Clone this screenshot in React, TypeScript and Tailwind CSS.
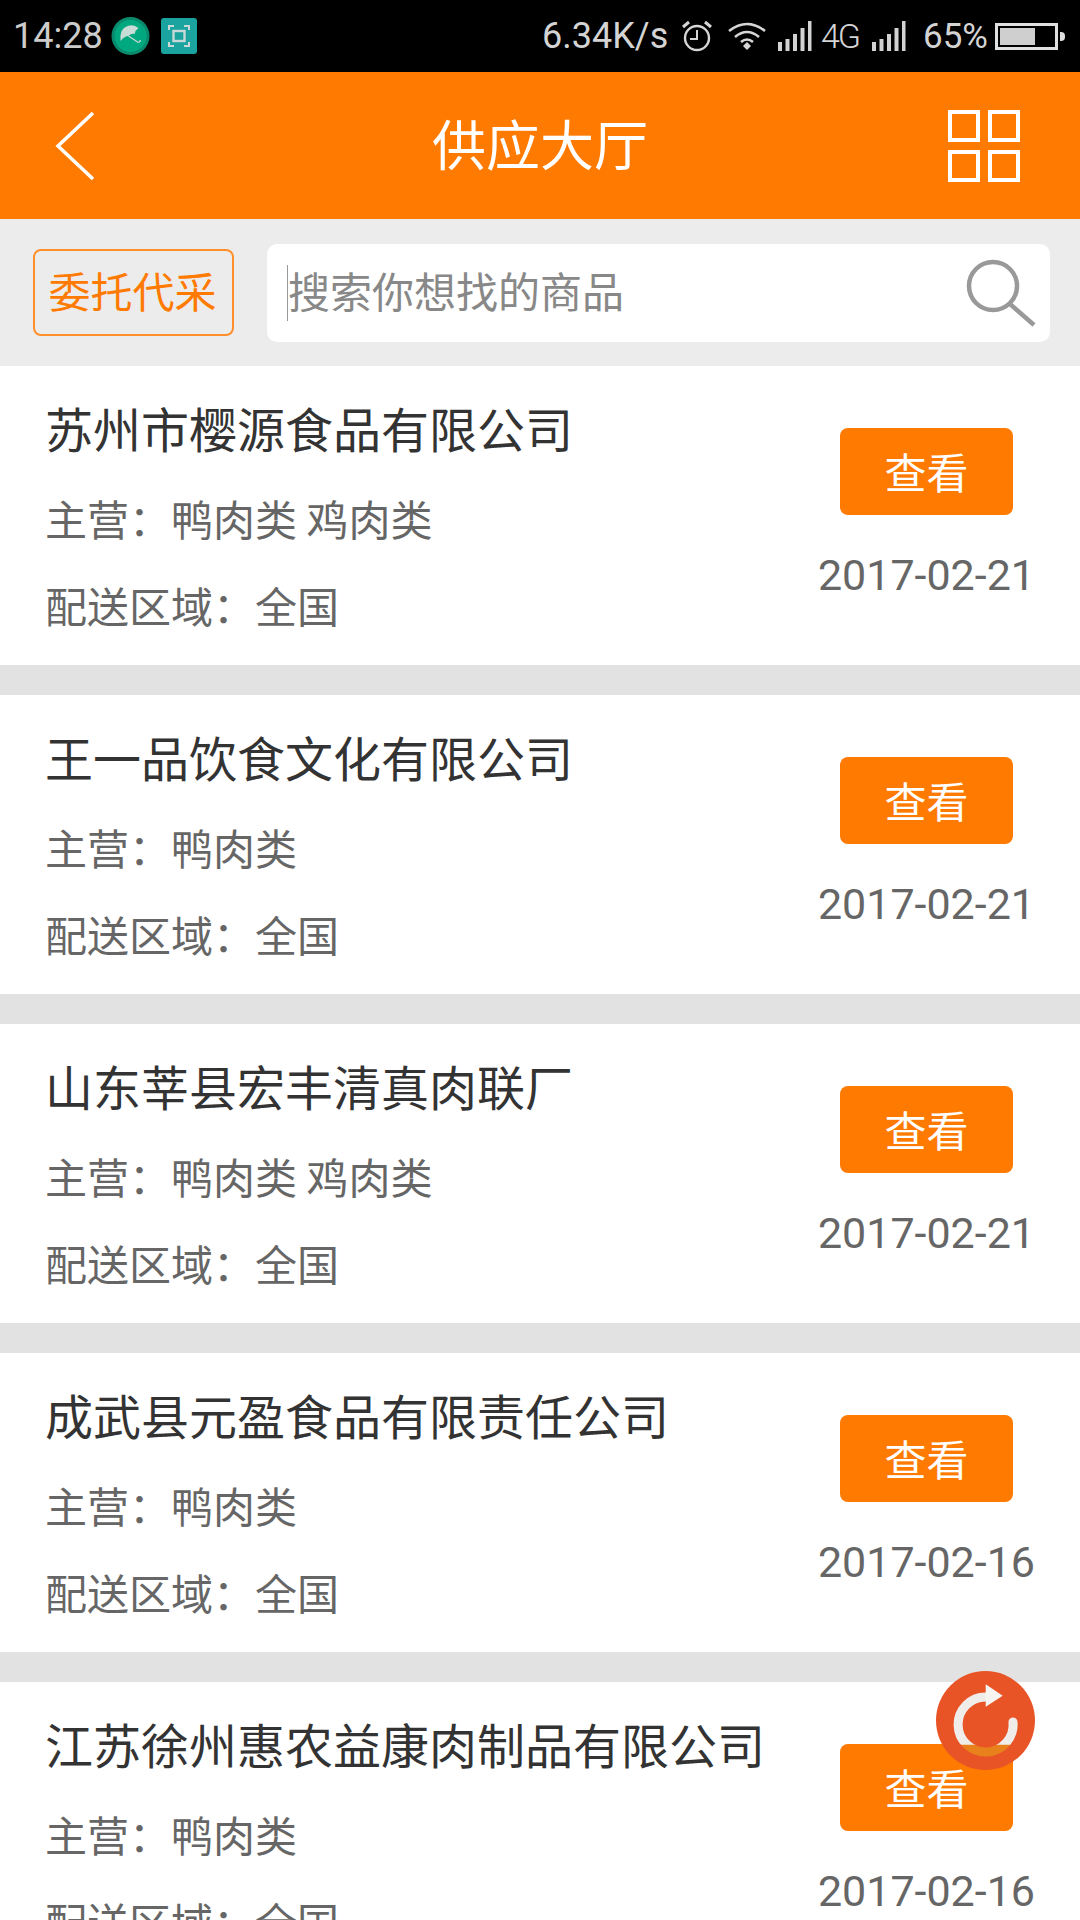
const companies = [
  { name: '苏州市樱源食品有限公司', main: '鸭肉类 鸡肉类', date: '2017-02-21' },
  { name: '王一品饮食文化有限公司', main: '鸭肉类', date: '2017-02-21' },
  { name: '山东莘县宏丰清真肉联厂', main: '鸭肉类 鸡肉类', date: '2017-02-21' },
  { name: '成武县元盈食品有限责任公司', main: '鸭肉类', date: '2017-02-16' },
  { name: '江苏徐州惠农益康肉制品有限公司', main: '鸭肉类', date: '2017-02-16' },
];

function SignalBars() {
  return (
    <svg width="34" height="30" viewBox="0 0 34 30" fill="#d2d2d2">
      <rect x="0" y="21" width="4" height="9" />
      <rect x="7.5" y="18" width="4" height="12" />
      <rect x="15" y="13" width="4" height="17" />
      <rect x="22.5" y="7" width="4" height="23" />
      <rect x="30" y="0" width="3.5" height="30" />
    </svg>
  );
}

function StatusBar() {
  return (
    <div className="h-[72px] bg-black flex items-center pl-[13px] text-[#d4d4d4] font-['Roboto',sans-serif] text-[36px] leading-none">
      <span className="w-[87px] text-[#cccccc]">14:28</span>
      <svg className="ml-[11px]" width="39" height="40" viewBox="0 0 38 40">
        <circle cx="19" cy="20" r="19" fill="#0a8a6c" />
        <circle cx="19" cy="20" r="16" fill="#00a880" />
        <path d="M9 25 Q8 14 14 11 Q21 7 27 12 Q24 14 23 18 Q20 17 17 20 Q13 20 9 25Z" fill="#c9dcd6" />
        <path d="M17 20 L26 26 Q28 27 29 24" stroke="#c9dcd6" strokeWidth="1.2" fill="none" />
      </svg>
      <svg className="ml-[11px]" width="36" height="36" viewBox="0 0 36 36">
        <rect width="36" height="36" rx="3" fill="#1aa39f" />
        <path d="M8 12V8H13M23 8H28V12M28 24V28H23M13 28H8V24" stroke="#c8d8d6" strokeWidth="2" fill="none" />
        <rect x="12.5" y="13" width="11" height="10" stroke="#c8d8d6" strokeWidth="2.4" fill="none" />
      </svg>
      <span className="ml-[345px] w-[125px]">6.34K/s</span>
      <svg className="ml-[15px]" width="30" height="32" viewBox="0 0 30 32" fill="none" stroke="#d6d6d6">
        <circle cx="15" cy="18" r="12" strokeWidth="2.4" />
        <path d="M15 10V19H8" strokeWidth="2" />
        <path d="M1 7 L7 2 M29 7 L23 2" strokeWidth="3" />
      </svg>
      <svg className="ml-[16px]" width="38" height="30" viewBox="0 0 38 30" fill="none" stroke="#d6d6d6" strokeWidth="2.6">
        <path d="M1 10 Q19 -4 37 10" />
        <path d="M7 16 Q19 6 31 16" />
        <path d="M13 21 Q19 16 25 21" />
        <path d="M15 25 L19 21 L23 25 L19 29Z" fill="#d6d6d6" stroke="none" />
      </svg>
      <span className="ml-[12px] flex"><SignalBars /></span>
      <span className="ml-[9px] w-[38px] text-[34px] font-light tracking-[-2px]">4G</span>
      <span className="ml-[13px] flex"><SignalBars /></span>
      <span className="ml-[17px] w-[64px] text-[35px] whitespace-nowrap">65%</span>
      <div className="ml-[8px] flex items-center">
        <div className="w-[63px] h-[27px] border-[3px] border-[#e0e0e0] p-[2px]">
          <div className="w-[35px] h-full bg-[#cfcfcf]" />
        </div>
        <div className="ml-[2px] w-[5px] h-[9px] bg-[#e0e0e0] rounded-r-sm" />
      </div>
    </div>
  );
}

function Header() {
  return (
    <div className="h-[147px] bg-[#ff7a00] grid grid-cols-[1fr_auto_1fr] items-center text-white">
      <svg className="ml-[55px]" width="40" height="72" viewBox="0 0 40 72" fill="none" stroke="white" strokeWidth="3.5">
        <path d="M38 3 L3 36 L38 69" />
      </svg>
      <div className="text-[54px] leading-none pb-[5px]">供应大厅</div>
      <div className="justify-self-end mr-[60px] grid grid-cols-2 gap-[8px]">
        <div className="w-[32px] h-[32px] border-[4px] border-white" />
        <div className="w-[32px] h-[32px] border-[4px] border-white" />
        <div className="w-[32px] h-[32px] border-[4px] border-white" />
        <div className="w-[32px] h-[32px] border-[4px] border-white" />
      </div>
    </div>
  );
}

function SearchBar() {
  return (
    <div className="h-[147px] bg-[#ececec] flex items-center pl-[33px] pr-[30px]">
      <div className="w-[201px] h-[87px] mb-[1px] border-2 border-[#ff8f2b] rounded-[8px] flex items-center justify-center text-[#ff7a00] text-[42px] leading-none pb-[4px] pr-[2px]">
        委托代采
      </div>
      <div className="ml-[33px] flex-1 h-[98px] bg-white rounded-[10px] flex items-center pl-[20px] pr-[14px]">
        <div className="w-px h-[56px] bg-[#999]" />
        <span className="text-[#888] text-[42px] leading-none pb-[5px]">搜索你想找的商品</span>
        <svg className="ml-auto" width="70" height="68" viewBox="0 0 70 68" fill="none" stroke="#999">
          <circle cx="27" cy="27" r="24" strokeWidth="4.5" />
          <path d="M44 45 L68 66" strokeWidth="4.5" />
        </svg>
      </div>
    </div>
  );
}

function CompanyRow({ name, main, date }: { name: string; main: string; date: string }) {
  return (
    <div className="h-[299px] bg-white flex justify-between pl-[45px] pr-[45px] mb-[30px] shrink-0">
      <div className="pt-[37px]">
        <div className="text-[48px] leading-[48px] text-[#333]">{name}</div>
        <div className="mt-[46px] text-[42px] leading-[42px] text-[#666]">主营：{main}</div>
        <div className="mt-[45px] text-[42px] leading-[42px] text-[#666]">配送区域：全国</div>
      </div>
      <div className="pt-[62px] flex flex-col items-center">
        <button className="w-[173px] h-[87px] bg-[#ff7a00] rounded-[8px] text-white text-[42px] leading-none pb-[2px]">查看</button>
        <div className="mt-[39px] font-['Roboto',sans-serif] text-[43px] leading-[42px] text-[#666]">{date}</div>
      </div>
    </div>
  );
}

export default function App() {
  return (
    <div className="relative w-[1080px] h-[1920px] overflow-hidden bg-[#e2e2e2] font-['Noto_Sans_CJK_SC','Noto_Sans',sans-serif]">
      <StatusBar />
      <Header />
      <SearchBar />
      {companies.map((c) => (
        <CompanyRow key={c.name} {...c} />
      ))}
      {/* 悬浮刷新按钮: 箭头圈是半透明的, 压在查看按钮上的部分偏橙 */}
      <div className="absolute left-[936px] top-[1671px] w-[99px] h-[99px] rounded-full bg-[#e85426]">
        <svg className="blur-[0.5px]" width="99" height="99" viewBox="0 0 99 99" fill="none">
          <defs>
            <linearGradient id="arcFill" gradientUnits="userSpaceOnUse" x1="0" y1="0" x2="0" y2="99">
              <stop offset="0.74" stopColor="#efece9" />
              <stop offset="0.75" stopColor="#e8801c" />
            </linearGradient>
          </defs>
          <path d="M77 51 A27.5 27.5 0 1 1 50 26" stroke="url(#arcFill)" strokeWidth="9" strokeLinecap="round" />
          <path d="M49.7 13.3 L66.7 24.7 L49.7 35.7Z" fill="#f7f5f2" />
        </svg>
      </div>
    </div>
  );
}
